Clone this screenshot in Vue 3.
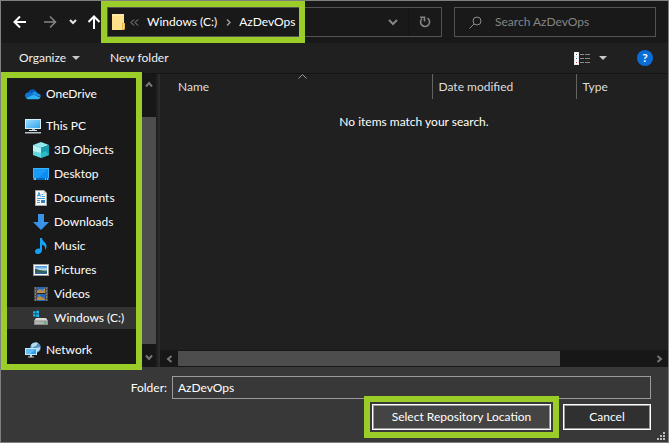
<script setup>
import { ref } from 'vue'

const folder = ref('AzDevOps')
const query = ref('')
const selected = ref('Windows (C:)')

const groups = [
  [{ name: 'OneDrive', icon: 'cloud' }],
  [
    { name: 'This PC', icon: 'pc' },
    { name: '3D Objects', icon: 'cube', child: true },
    { name: 'Desktop', icon: 'desktop', child: true },
    { name: 'Documents', icon: 'document', child: true },
    { name: 'Downloads', icon: 'download', child: true },
    { name: 'Music', icon: 'music', child: true },
    { name: 'Pictures', icon: 'picture', child: true },
    { name: 'Videos', icon: 'video', child: true },
    { name: 'Windows (C:)', icon: 'drive', child: true }
  ],
  [{ name: 'Network', icon: 'network' }]
]
</script>

<template>
  <svg class="sprite" aria-hidden="true">
    <defs>
      <linearGradient id="g-screen" x1="0" y1="0" x2="1" y2="1">
        <stop offset="0" stop-color="#9bdcff" />
        <stop offset="1" stop-color="#35a5ee" />
      </linearGradient>
      <linearGradient id="g-sky" x1="0" y1="0" x2="0" y2="1">
        <stop offset="0" stop-color="#3c8fd8" />
        <stop offset="0.5" stop-color="#cfe9f5" />
        <stop offset="0.6" stop-color="#3c7a7c" />
        <stop offset="1" stop-color="#2a5f9a" />
      </linearGradient>
    </defs>
    <symbol id="i-cloud" viewBox="0 0 16 16">
      <path d="M3 7.5A4.6 4.6 0 0 1 11.4 5.3L10 9 4 10z" fill="#0a56b4" />
      <path d="M3.4 6.6A4 4 0 0 1 6.6 7.2L9.5 9.4 2 12.4A3 3 0 0 1 3.4 6.6z" fill="#1272d0" />
      <path d="M6.6 7.2C8.5 5.2 11.8 5 12.7 7.6A3 3 0 0 1 15.6 11L9.5 9.2z" fill="#1b8fe4" />
      <path d="M1.2 12 8.6 8.8 15.4 11.6A2.6 2.6 0 0 1 13 13.3H3.4A2.8 2.8 0 0 1 1.2 12z" fill="#2fb2f5" />
    </symbol>
    <symbol id="i-pc" viewBox="0 0 16 16">
      <path d="M0 1h16v10H0z" fill="#d5edf9" />
      <path d="M1 2h14v8H1z" fill="url(#g-screen)" />
      <path d="M7 11h3v1H7z" fill="#9cb4c2" />
      <path d="M4 12h8v1H4z" fill="#dfe7ec" />
      <path d="M0 14h16v1.5H0z" fill="#b9c4cc" />
    </symbol>
    <symbol id="i-cube" viewBox="0 0 16 16">
      <path d="M8 0l8 3-8 3-8-3z" fill="#8fe9ee" />
      <path d="M0 3l8 3v10l-8-3z" fill="#5fd8df" />
      <path d="M16 3L8 6v10l8-3z" fill="#169eaf" />
      <path d="M0 3l8 3v5L0 9z" fill="#b5f3f4" />
      <path d="M8 11l5-2 3 4-8 3z" fill="#2fb9c6" />
    </symbol>
    <symbol id="i-desktop" viewBox="0 0 16 16">
      <path d="M0 2h16v12H0z" fill="#37b3ff" />
      <path d="M1 3h14v9H1z" fill="#0a8df2" />
      <path d="M1 3h14L5 12H1z" fill="#199cf9" />
      <path d="M0 12h16v2H0z" fill="#0767b5" />
      <path d="M1 12.5h2v1H1zM12 12.5h1v1h-1zM14 12.5h1v1h-1z" fill="#fff" />
    </symbol>
    <symbol id="i-document" viewBox="0 0 16 16">
      <path d="M2 0h9l3 3v13H2z" fill="#a5a5a5" />
      <path d="M3 1h7.5L13 3.5V15H3z" fill="#f8f8f8" />
      <path d="M10.5 0v3.5H14z" fill="#cfcfcf" />
      <path d="M4.500 6.500l1.500-4 1.500 4M5 5.500h2" fill="none" stroke="#2490d8" />
      <path d="M8.500 4.500h2M8.500 6.500H12M4 8.500h8M4 10.500h3M4 12.500h3" fill="none" stroke="#4a9ed6" />
      <path d="M8 10h4v3H8z" fill="#397ebd" />
    </symbol>
    <symbol id="i-download" viewBox="0 0 16 16">
      <path d="M5 0h6v8h5l-8 8-8-8h5z" fill="#3993e8" />
    </symbol>
    <symbol id="i-music" viewBox="0 0 16 16">
      <path d="M7 0h2c.2 3.500 4.500 4.300 4.500 8 0 1.500-.6 3-1.400 4 .5-3-.6-4.800-3.100-5.300V12c0 2.300-1.600 4-3.800 4C3.400 16 2 15 2 13.400 2 11.400 4.500 10 7 10.600z" fill="#14a0f8" />
    </symbol>
    <symbol id="i-picture" viewBox="0 0 16 16">
      <path d="M0 2h16v12H0z" fill="#9b9b9b" />
      <path d="M1 3h14v10H1z" fill="#fff" />
      <path d="M2 4h12v8H2z" fill="url(#g-sky)" />
      <path d="M2 7c3 0 6 2 12 3v1c-5 0-9-1-12-1z" fill="#315e58" />
    </symbol>
    <symbol id="i-video" viewBox="0 0 16 16">
      <path d="M1 1h14v14H1z" fill="#4d4d4d" />
      <path d="M4 1h8v14H4z" fill="#2a66b5" />
      <path d="M4 5l3-2 2 2 3-3v5H4zM4 12l3-2 5 3v1H4z" fill="#b98f45" />
      <path d="M8 3h3v2H8zM5 9h2v2H5z" fill="#4789dc" />
      <path d="M4 7.500h8" stroke="#222" />
      <path d="M2.500 1.500v13M13.500 1.500v13" stroke="#b0b0b0" stroke-dasharray="1 2" />
    </symbol>
    <symbol id="i-drive" viewBox="0 0 16 16">
      <path d="M0 1.500l2.500-.5v2.500H0zM3.200 1L6 .5v3H3.200zM0 4.200h2.500v2.500L0 6.300zM3.200 4.200H6v3l-2.800-.4z" fill="#14b5f1" />
      <path d="M3 8h10l2 3H1z" fill="#dcdcdc" />
      <path d="M1 10.500h14V15H1z" fill="#8d8d8d" />
      <path d="M2 11.500h12V14H2z" fill="#b5b5b5" />
      <path d="M11 12h2v1.500h-2z" fill="#23c943" />
    </symbol>
    <symbol id="i-network" viewBox="0 0 16 16">
      <circle cx="10.500" cy="5.500" r="5.300" fill="#5293bf" />
      <path d="M6 3c2-2.500 5-3 7-2l-2 3-3 1-1 2zM11 6l4-1c.5 2-1 4-2.500 5z" fill="#b7dced" />
      <path d="M0 6h12v7H0z" fill="#c4e9fb" />
      <path d="M1 7h10v5H1z" fill="#2b9fe9" />
      <path d="M1 7h10L5 12H1z" fill="#5fbef4" />
      <path d="M5 13h2v1.500H5zM3 14.500h6v1H3z" fill="#c3d3dd" />
    </symbol>
    <symbol id="i-folder" viewBox="0 0 14 16">
      <path d="M0 0h12v16H0z" fill="#ffe18b" />
      <path d="M0 0h12v2H0z" fill="#ffe9a8" />
      <path d="M10 9h3v6l-1 1h-2z" fill="#e9b94d" />
      <path d="M11 10h1v5h-1z" fill="#ffdb75" />
    </symbol>
  </svg>

  <main class="dialog">
    <header class="top">
      <button class="back" type="button" aria-label="Back">
        <svg width="14" height="14" viewBox="0 0 14 14"><path d="M7 1.500L1.500 7 7 12.500M1.500 7H13" stroke="#fff" stroke-width="2" fill="none" /></svg>
      </button>
      <button class="forward" type="button" aria-label="Forward">
        <svg width="14" height="14" viewBox="0 0 14 14"><path d="M7 1.500L12.500 7 7 12.500M12.500 7H1" stroke="#868686" stroke-width="1.500" fill="none" /></svg>
      </button>
      <button class="recent" type="button" aria-label="Recent locations">
        <svg width="8" height="6" viewBox="0 0 8 6"><path d="M1 1l3 3 3-3" stroke="#e5e5e5" stroke-width="2" fill="none" /></svg>
      </button>
      <button class="up" type="button" aria-label="Up">
        <svg width="14" height="14" viewBox="0 0 14 14"><path d="M1.500 7L7 1.500 12.500 7M7 1.500V14" stroke="#fff" stroke-width="2" fill="none" /></svg>
      </button>

      <nav class="address" aria-label="Address">
        <div class="crumbs">
          <svg class="folder" width="14" height="16"><use href="#i-folder" /></svg>
          <svg class="double" width="9" height="7" viewBox="0 0 9 7"><path d="M4 .5l-3 3 3 3M8 .5l-3 3 3 3" stroke="#9a9a9a" fill="none" /></svg>
          <a href="#c">Windows (C:)</a>
          <svg class="next" width="5" height="7" viewBox="0 0 5 7"><path d="M1 .5l3 3-3 3" stroke="#9a9a9a" stroke-width="1.500" fill="none" /></svg>
          <a href="#azdevops">AzDevOps</a>
        </div>
        <button class="history" type="button" aria-label="Previous locations">
          <svg width="10" height="7" viewBox="0 0 10 7"><path d="M1 1l4 4 4-4" stroke="#858585" stroke-width="2" fill="none" /></svg>
        </button>
        <button class="refresh" type="button" aria-label="Refresh">
          <svg width="12" height="12" viewBox="0 0 12 12"><path d="M8.500 2.200A4.500 4.500 0 1 1 3.200 2.500" stroke="#858585" stroke-width="1.600" fill="none" /><path d="M1 1.300h4.500V5.500" stroke="#858585" stroke-width="1.600" fill="none" /></svg>
        </button>
      </nav>

      <label class="search">
        <svg width="13" height="13" viewBox="0 0 13 13"><circle cx="8" cy="5" r="4" stroke="#8b8b8b" fill="none" /><path d="M5 8L.5 12.500" stroke="#8b8b8b" /></svg>
        <input v-model="query" type="search" aria-label="Search AzDevOps" placeholder="Search AzDevOps" />
      </label>
    </header>

    <div class="toolbar">
      <button class="organize" type="button">Organize <i class="tri"></i></button>
      <button type="button">New folder</button>
      <button class="view" type="button" aria-label="Change your view">
        <svg width="16" height="13" viewBox="0 0 16 13">
          <path d="M0 0h5v13H0z" fill="#e8e8e8" />
          <path d="M1 1h3v3H1zM1 5h3v3H1zM1 9h3v3H1z" fill="#fff" />
          <path d="M2 2h1v1H2z" fill="#555" />
          <path d="M2 6h1v1H2z" fill="#2a6fd0" />
          <path d="M2 10h1v1H2z" fill="#c02020" />
          <path d="M6 2.500h4M11 2.500h5M6 6.500h4M11 6.500h5M6 10.500h4M11 10.500h5" stroke="#8a8a8a" />
        </svg>
        <i class="tri"></i>
      </button>
      <button class="help" type="button" aria-label="Get help">?</button>
    </div>

    <div class="body">
      <nav class="tree" aria-label="Folders">
        <ul v-for="(group, i) in groups" :key="i">
          <li v-for="item in group" :key="item.name">
            <button
              type="button"
              :class="{ child: item.child, selected: item.name === selected }"
              @click="selected = item.name"
            >
              <svg width="16" height="16"><use :href="'#i-' + item.icon" /></svg>
              {{ item.name }}
            </button>
          </li>
        </ul>
      </nav>
      <div class="vbar">
        <button type="button" aria-label="Scroll up">
          <svg width="8" height="7" viewBox="0 0 8 7"><path d="M1 5.500l3-3.500 3 3.500" stroke="#777" stroke-width="2" fill="none" /></svg>
        </button>
        <div class="vthumb"></div>
        <button type="button" aria-label="Scroll down">
          <svg width="8" height="7" viewBox="0 0 8 7"><path d="M1 1.500L4 5l3-3.500" stroke="#777" stroke-width="2" fill="none" /></svg>
        </button>
      </div>

      <section class="files">
        <table>
          <colgroup><col class="c-name" /><col class="c-date" /><col /></colgroup>
          <thead>
            <tr>
              <th class="name" aria-sort="ascending">
                Name
                <svg class="sort" width="9" height="5" viewBox="0 0 9 5"><path d="M.5 4.500l4-4 4 4" stroke="#9a9a9a" fill="none" /></svg>
              </th>
              <th>Date modified</th>
              <th>Type</th>
            </tr>
          </thead>
          <tbody>
            <tr><td colspan="3">No items match your search.</td></tr>
          </tbody>
        </table>
        <div class="hbar">
          <button type="button" aria-label="Scroll left">
            <svg width="7" height="8" viewBox="0 0 7 8"><path d="M5.500 1L2 4l3.500 3" stroke="#777" stroke-width="2" fill="none" /></svg>
          </button>
          <div class="htrack"><div class="hthumb"></div></div>
          <button type="button" aria-label="Scroll right">
            <svg width="7" height="8" viewBox="0 0 7 8"><path d="M1.500 1L5 4 1.500 7" stroke="#777" stroke-width="2" fill="none" /></svg>
          </button>
        </div>
      </section>
    </div>

    <footer class="footer">
      <div class="field">
        <label for="folder">Folder:</label>
        <input id="folder" v-model="folder" type="text" />
      </div>
      <div class="actions">
        <div class="marked"><button class="primary" type="button">Select Repository Location</button></div>
        <button class="cancel" type="button">Cancel</button>
      </div>
      <svg class="grip" width="8" height="8" viewBox="0 0 8 8" aria-hidden="true"><path d="M6 0h2v2H6zM3 3h2v2H3zM6 3h2v2H6zM0 6h2v2H0zM3 6h2v2H3zM6 6h2v2H6z" fill="#bdbdbd" /></svg>
    </footer>
  </main>
</template>

<style>
body {
  margin: 0;
  background: #202020;
}
</style>

<style scoped>
*,
*::after {
  box-sizing: border-box;
}
.sprite {
  position: absolute;
  width: 0;
  height: 0;
}
.dialog {
  display: flex;
  flex-direction: column;
  min-height: 100vh;
  border: 1px solid #7f7f7f;
  background: #202020;
  color: #fff;
  font: 12px/16px Lato, "Open Sans", sans-serif;
}
button,
input {
  margin: 0;
  padding: 0;
  border: 0;
  background: none;
  color: inherit;
  font: inherit;
}
svg {
  display: block;
  flex: none;
}

.top {
  display: flex;
  align-items: center;
  height: 42px;
  padding-right: 12px;
  background: #191919;
}
.top > button {
  display: flex;
  align-items: center;
  justify-content: center;
  height: 28px;
}
.back {
  width: 38px;
}
.forward {
  width: 22px;
}
.recent {
  width: 24px;
}
.up {
  width: 18px;
}
.address {
  position: relative;
  display: flex;
  flex: 333;
  align-items: stretch;
  height: 30px;
  margin-left: 4px;
  border: 1px solid #535353;
}
.crumbs {
  display: flex;
  flex: 1;
  align-items: center;
  padding-left: 4px;
  white-space: nowrap;
}
.crumbs::after {
  content: "";
  position: absolute;
  top: -7px;
  left: -7px;
  width: 204px;
  height: 42px;
  border: 6px solid #9acd27;
}
.crumbs a {
  color: #fff;
  text-decoration: none;
}
.double {
  margin: 0 8px 0 4px;
}
.next {
  margin: 0 8px 0 9px;
}
.history,
.refresh {
  display: flex;
  align-items: center;
  justify-content: center;
}
.history {
  width: 30px;
}
.refresh {
  width: 33px;
  border-left: 1px solid #141414;
}
.search {
  display: flex;
  flex: 172;
  align-items: center;
  gap: 13px;
  height: 30px;
  margin-left: 12px;
  padding: 0 14px;
  border: 1px solid #535353;
}
.search input {
  flex: 1;
  width: 0;
  min-width: 0;
}
.search input::placeholder {
  color: #858585;
  opacity: 1;
}

.toolbar {
  display: flex;
  align-items: center;
  height: 31px;
  padding: 0 15px 0 18px;
  border-bottom: 1px solid #141414;
  color: #f0f0f0;
}
.toolbar button {
  display: flex;
  align-items: center;
  gap: 6px;
}
.tri {
  border: 4px solid transparent;
  border-top: 4px solid #c8c8c8;
  border-bottom: 0;
}
.toolbar .organize {
  width: 91px;
}
.toolbar .view {
  gap: 9px;
  margin-left: auto;
}
.toolbar .help {
  justify-content: center;
  width: 16px;
  height: 16px;
  margin-left: 30px;
  border-radius: 8px;
  background: #0a6cd6;
  color: #fff;
  font-weight: 700;
}

.body {
  display: flex;
  flex: 1;
}
.tree {
  z-index: 1;
  width: 141px;
  margin-top: -2px;
  margin-bottom: -3px;
  padding: 5px 0 1px;
  border: 6px solid #9acd27;
  background: #191919;
}
.tree ul {
  display: flex;
  flex-direction: column;
  gap: 2px;
  margin: 0 0 10px;
  padding: 0;
  list-style: none;
}
.tree ul:last-child {
  margin: 0;
}
.tree button {
  display: flex;
  align-items: center;
  gap: 5px;
  width: 100%;
  height: 22px;
  padding-left: 18px;
  white-space: nowrap;
}
.tree .child {
  padding-left: 26px;
}
.tree .selected {
  background: #333;
}
.vbar {
  display: flex;
  flex-direction: column;
  width: 14px;
  background: #171717;
}
.vbar button {
  display: flex;
  align-items: center;
  justify-content: center;
  height: 20px;
}
.vthumb {
  flex: 1;
  margin-top: 23px;
  margin-bottom: 3px;
  background: #4d4d4d;
}
.files {
  display: flex;
  flex: 1;
  flex-direction: column;
  justify-content: space-between;
  margin-left: 2px;
  border-left: 2px solid #2b2b2b;
}
table {
  width: 100%;
  border-collapse: collapse;
  table-layout: fixed;
}
.c-name {
  width: 272px;
}
.c-date {
  width: 144px;
}
th {
  height: 25px;
  padding: 0 6px;
  color: #dedede;
  font-weight: 400;
  text-align: left;
}
th + th {
  border-left: 1px solid #636363;
}
.name {
  position: relative;
  padding-left: 18px;
}
.sort {
  position: absolute;
  top: 0;
  left: 51%;
}
td {
  padding: 15px 0;
  text-align: center;
}
.hbar {
  display: flex;
  height: 17px;
  background: #171717;
}
.hbar button {
  display: flex;
  align-items: center;
  justify-content: center;
  width: 18px;
}
.htrack {
  flex: 1;
  padding: 1px 0;
}
.hthumb {
  width: 81%;
  height: 100%;
  background: #4d4d4d;
}

.footer {
  position: relative;
  padding: 9px 17px 4px 0;
  background: #383838;
}
.field {
  display: flex;
  align-items: center;
}
.field label {
  width: 171px;
  padding-right: 5px;
  text-align: right;
}
.field input {
  flex: 1;
  min-width: 0;
  height: 23px;
  padding: 0 5px;
  border: 1px solid #9b9b9b;
}
.actions {
  display: flex;
  align-items: center;
  justify-content: flex-end;
  gap: 4px;
  margin-top: -3px;
}
.marked {
  padding: 2px;
  border: 6px solid #9acd27;
}
.actions button {
  display: block;
  height: 26px;
  border: 1px solid #fff;
  box-shadow: inset 0 0 0 1px #999;
}
.actions .primary {
  width: 179px;
  background: #444;
}
.actions .cancel {
  width: 88px;
  background: #303030;
}
.grip {
  position: absolute;
  right: 3px;
  bottom: 2px;
}
</style>
